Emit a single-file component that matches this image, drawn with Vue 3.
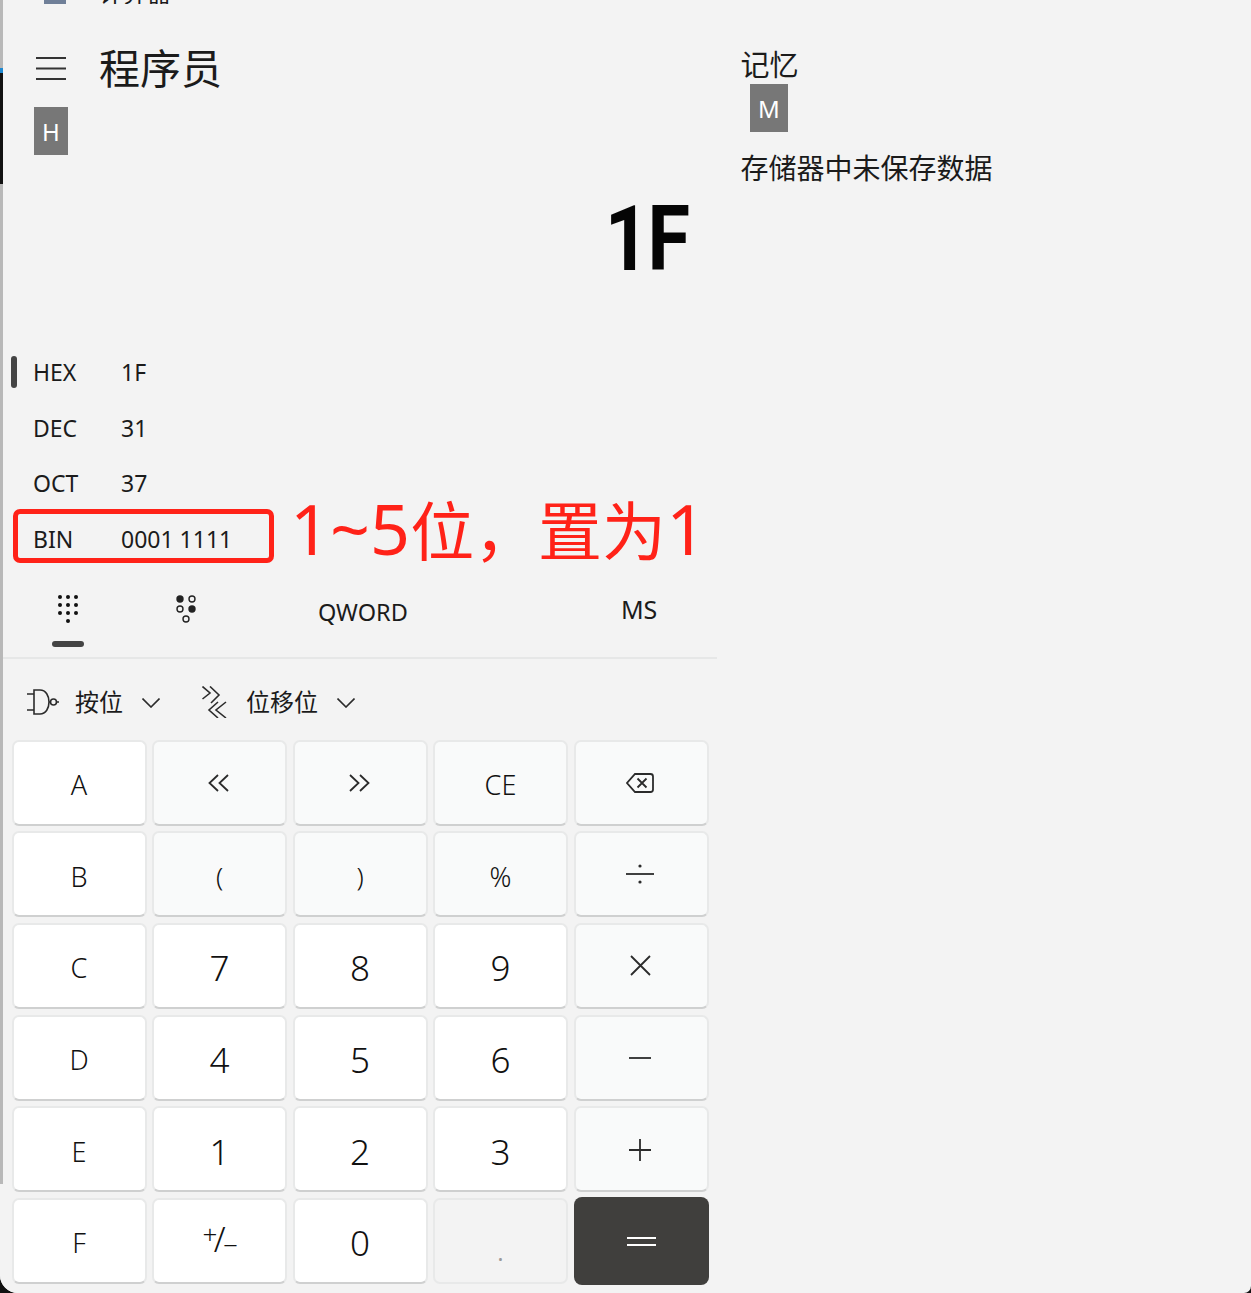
<script setup>
const bases = [
  { label: 'HEX', value: '1F', active: true },
  { label: 'DEC', value: '31' },
  { label: 'OCT', value: '37' }
]
const dots = [
  [11, 2], [19, 2], [27, 2],
  [11, 10], [19, 10], [27, 10],
  [11, 18], [19, 18], [27, 18],
  [19, 26]
]
const keys = [
  { t: 'A', c: 'white letter' }, { i: 'lshift', c: 'soft' }, { i: 'rshift', c: 'soft' }, { t: 'CE', c: 'soft letter' }, { i: 'back', c: 'soft' },
  { t: 'B', c: 'white letter' }, { t: '(', c: 'soft paren' }, { t: ')', c: 'soft paren' }, { t: '%', c: 'soft letter' }, { i: 'div', c: 'soft' },
  { t: 'C', c: 'white letter' }, { t: '7', c: 'white digit' }, { t: '8', c: 'white digit' }, { t: '9', c: 'white digit' }, { i: 'mul', c: 'soft' },
  { t: 'D', c: 'white letter' }, { t: '4', c: 'white digit' }, { t: '5', c: 'white digit' }, { t: '6', c: 'white digit' }, { i: 'minus', c: 'soft' },
  { t: 'E', c: 'white letter' }, { t: '1', c: 'white digit' }, { t: '2', c: 'white digit' }, { t: '3', c: 'white digit' }, { i: 'plus', c: 'soft' },
  { t: 'F', c: 'white letter' }, { i: 'neg', c: 'white' }, { t: '0', c: 'white digit' }, { t: '.', c: 'off' }, { i: 'eq', c: 'accent' }
]
const paths = {
  lshift: 'M10 1 1.5 9 10 17M20 1 11.5 9 20 17',
  rshift: 'M2 1 10.5 9 2 17M12 1 20.5 9 12 17',
  back: 'M9 2H24.5Q27 2 27 4.500V17.500Q27 20 24.500 20H9L1 11ZM11.500 6.500 20.500 15.500M20.500 6.500 11.500 15.500',
  div: 'M0 10H28',
  mul: 'M1 1 20 20M20 1 1 20',
  minus: 'M0 10H22',
  plus: 'M0 11H22M11 0V22',
  eq: 'M0 2H29M0 9H29'
}
const sizes = {
  lshift: [22, 18], rshift: [22, 18], back: [28, 22], div: [28, 20],
  mul: [21, 21], minus: [22, 20], plus: [22, 22], eq: [29, 11]
}
</script>

<template>
  <div class="screen">
    <main class="window">
      <section class="calc">
        <div class="titlebar">
          <span class="app-icon"></span>
          <span class="app-name">计算器</span>
        </div>

        <header class="mode">
          <svg class="menu" width="30" height="24" viewBox="0 0 30 24" aria-hidden="true">
            <path d="M0 2H30M0 12.500H30M0 23H30" />
          </svg>
          <h1>程序员</h1>
        </header>
        <div class="tip tip-h">H</div>

        <div class="display">1F</div>

        <ul class="bases">
          <li v-for="b in bases" :key="b.label" class="base-row">
            <span v-if="b.active" class="marker"></span>
            <span class="base-label">{{ b.label }}</span>
            <span>{{ b.value }}</span>
          </li>
          <li class="bin-line">
            <div class="bin-box">
              <span class="base-label">BIN</span>
              <span>0001 1111</span>
            </div>
            <span class="note"><span class="note-latin">1~5</span>位，置为<span class="note-latin">1</span></span>
          </li>
        </ul>

        <nav class="tabs">
          <div class="tab-keypad">
            <svg width="38" height="30" viewBox="0 0 38 30" aria-hidden="true">
              <circle v-for="(d, n) in dots" :key="n" :cx="d[0]" :cy="d[1]" r="2" fill="#111" />
            </svg>
            <span class="tab-bar"></span>
          </div>
          <svg class="tab-bits" width="24" height="30" viewBox="0 0 24 30" aria-hidden="true">
            <circle cx="5" cy="4" r="3.700" fill="#222" />
            <circle cx="17" cy="4" r="3" class="ring" />
            <circle cx="5" cy="14" r="3" class="ring" />
            <circle cx="17" cy="14" r="3.700" fill="#222" />
            <circle cx="11" cy="24" r="3" class="ring" />
          </svg>
          <span class="qword">QWORD</span>
          <span class="ms">MS</span>
        </nav>

        <div class="ops">
          <svg class="nand" width="32" height="26" viewBox="0 0 32 26" aria-hidden="true">
            <path d="M0 5H7M0 21H7M7 1H13C25 1 25 25 13 25H7ZM22 13H24M29 13H32" />
            <circle cx="26.500" cy="13" r="3" />
          </svg>
          <span class="op-label">按位</span>
          <svg class="chev" width="18" height="10" viewBox="0 0 18 10" aria-hidden="true">
            <path d="M0.500 0.500 9 9 17.500 0.500" />
          </svg>
          <svg class="shift" width="26" height="32" viewBox="0 0 26 32" aria-hidden="true">
            <path d="M0.500 0.500 8 7 0.500 13M8 0.500 17 9 9 17M16 16 7 24 16 32M24 16 14 24 24 32" />
          </svg>
          <span class="op-label">位移位</span>
          <svg class="chev" width="18" height="10" viewBox="0 0 18 10" aria-hidden="true">
            <path d="M0.500 0.500 9 9 17.500 0.500" />
          </svg>
        </div>

        <div class="keys">
          <button v-for="(k, n) in keys" :key="n" class="key" :class="k.c" type="button">
            <template v-if="k.t">{{ k.t }}</template>
            <span v-else-if="k.i === 'neg'" class="neg"><i class="neg-p">+</i><i class="neg-s">/</i><i class="neg-m">−</i></span>
            <svg v-else :width="sizes[k.i][0]" :height="sizes[k.i][1]" :viewBox="`0 0 ${sizes[k.i][0]} ${sizes[k.i][1]}`" :class="'ico-' + k.i" aria-hidden="true">
              <path :d="paths[k.i]" />
              <template v-if="k.i === 'div'">
                <circle cx="14" cy="2" r="1.600" class="dot" />
                <circle cx="14" cy="18" r="1.600" class="dot" />
              </template>
            </svg>
          </button>
        </div>
      </section>

      <aside class="memory">
        <h2>记忆</h2>
        <div class="tip tip-m">M</div>
        <p>存储器中未保存数据</p>
      </aside>
    </main>
    <span class="edge edge-gray"></span>
    <span class="edge edge-blue"></span>
    <span class="edge edge-dark"></span>
  </div>
</template>

<style scoped>
.screen {
  position: relative;
  width: 1251px;
  height: 1293px;
  overflow: hidden;
  background: #111;
  font-family: "Noto Sans", "Noto Sans CJK SC", sans-serif;
  color: #1b1b1b;
}
.window {
  display: flex;
  width: 1251px;
  height: 1293px;
  background: #f3f3f3;
  border-radius: 0 0 7px 18px;
  overflow: hidden;
}
.calc {
  width: 717px;
  flex: none;
  background: #f3f3f3;
}
.titlebar {
  display: flex;
  align-items: flex-end;
  height: 4px;
  overflow: hidden;
  padding-left: 44px;
}
.app-icon {
  width: 22px;
  height: 4px;
  flex: none;
  background: #6f7f98;
}
.app-name {
  margin-left: 33px;
  font-size: 24px;
  line-height: 24px;
  margin-bottom: -1px;
}
.mode {
  display: flex;
  align-items: center;
  height: 88px;
  padding: 40px 0 0 36px;
  box-sizing: border-box;
}
.menu path {
  fill: none;
  stroke: #333;
  stroke-width: 1.800;
}
h1 {
  margin: 0 0 0 33px;
  font-size: 41px;
  font-weight: 400;
  line-height: 48px;
}
.tip {
  display: flex;
  align-items: center;
  justify-content: center;
  background: #777;
  color: #fff;
  font-size: 24px;
}
.tip-h {
  width: 34px;
  height: 48px;
  margin: 15px 0 0 34px;
}
.display {
  height: 110px;
  margin-top: 30px;
  padding-right: 29px;
  text-align: right;
  font-family: Roboto, sans-serif;
  font-size: 90px;
  font-weight: 700;
  line-height: 110px;
  letter-spacing: -2px;
  color: #050505;
  transform: scaleX(0.86);
  transform-origin: 690px 50%;
}
.bases {
  list-style: none;
  margin: 49.500px 0 0;
  padding: 0;
  font-size: 23px;
}
.base-row {
  position: relative;
  display: flex;
  align-items: center;
  height: 55.500px;
  padding-left: 33px;
}
.marker {
  position: absolute;
  left: 11px;
  top: 11.500px;
  width: 6px;
  height: 32px;
  border-radius: 3px;
  background: #444;
}
.base-label {
  width: 88px;
  flex: none;
}
.bin-line {
  display: flex;
  align-items: center;
  height: 54px;
  margin-left: 13px;
  margin-top: -2.500px;
}
.bin-box {
  display: flex;
  align-items: center;
  width: 261px;
  height: 54px;
  box-sizing: border-box;
  border: 5px solid #ff2218;
  border-radius: 7px;
  padding: 6px 0 0 15px;
}
.note {
  margin-left: 16px;
  margin-top: -12px;
  font-family: "Noto Sans", "Noto Sans CJK SC", sans-serif;
  font-size: 64px;
  line-height: 70px;
  color: #ff2218;
  white-space: nowrap;
}
.note-latin {
  font-size: 70px;
}
.tabs {
  position: relative;
  display: flex;
  align-items: flex-start;
  height: 96px;
  margin-left: 3px;
  border-bottom: 2px solid #e6e7e7;
  font-size: 23.500px;
  box-sizing: border-box;
}
.tab-keypad {
  display: flex;
  flex-direction: column;
  align-items: center;
  width: 38px;
  margin: 32px 0 0 46px;
}
.tab-bar {
  width: 32px;
  height: 6px;
  margin-top: 16px;
  border-radius: 3px;
  background: #444;
}
.tab-bits {
  margin: 32px 0 0 88px;
}
.ring {
  fill: none;
  stroke: #222;
  stroke-width: 1.400;
}
.qword {
  margin: 33px 0 0 119px;
  line-height: 32px;
}
.ms {
  margin: 30px 0 0 213px;
  font-size: 25px;
  line-height: 32px;
}
.ops {
  display: flex;
  align-items: center;
  height: 81px;
  padding-left: 27px;
  padding-top: 5px;
  box-sizing: border-box;
  font-size: 24px;
}
.ops path,
.ops circle {
  fill: none;
  stroke: #2b2b2b;
  stroke-width: 1.600;
}
.op-label {
  line-height: 32px;
}
.nand {
  margin-right: 16px;
}
.chev {
  margin-left: 19px;
  margin-top: 2px;
}
.shift {
  margin: 0 18px 0 42px;
}
.keys {
  display: grid;
  grid-template-columns: repeat(5, 135px);
  grid-auto-rows: 86px;
  gap: 5.700px 5.500px;
  margin-left: 11.500px;
}
.key {
  display: flex;
  align-items: center;
  justify-content: center;
  padding: 4px 0 0;
  border: 2px solid #e8e9e9;
  border-bottom-color: #cfd0d0;
  border-radius: 7px;
  font-family: inherit;
  color: #111;
  font-weight: 400;
  font-size: 26px;
}
.white {
  background: #fff;
}
.soft {
  background: #f9fafa;
}
.off {
  background: #f3f3f3;
  border-color: #e8e9e9;
  color: #999;
  padding-top: 22px;
  font-size: 22px;
}
.accent {
  background: #403f3d;
  border: 0;
  border-radius: 8px;
  margin: -1px 0 -1px;
  padding: 1px 0 0;
}
.letter {
  font-size: 27px;
  font-weight: 350;
}
.digit {
  font-size: 35px;
  font-weight: 350;
}
.paren {
  font-size: 26px;
  font-weight: 350;
}
.key svg path {
  fill: none;
  stroke: #2b2b2b;
  stroke-width: 1.800;
}
.key .dot {
  fill: #2b2b2b;
}
.ico-lshift,
.ico-rshift,
.ico-back,
.ico-div,
.ico-mul,
.ico-minus {
  margin: 0 2px 4px 0;
}
.ico-plus {
  margin: 0 2px 2px 0;
}
.key .ico-eq path {
  stroke: #fff;
}
.neg {
  display: flex;
  align-items: flex-start;
  height: 34px;
  margin: 0 2px 8px 0;
}
.neg i {
  display: block;
  font-style: normal;
  line-height: 1;
  font-weight: 350;
}
.neg-p {
  margin-top: -1px;
  font-size: 26px;
  letter-spacing: -3.500px;
}
.neg-s {
  font-size: 34px;
  letter-spacing: -2.500px;
}
.neg-m {
  margin-top: 10px;
  font-size: 26px;
  letter-spacing: -3.500px;
}
.memory {
  padding: 45px 0 0 23.500px;
}
h2 {
  margin: 0;
  font-size: 29px;
  font-weight: 400;
  line-height: 39px;
}
.tip-m {
  width: 38px;
  height: 48px;
  margin-left: 9.500px;
}
.memory p {
  margin: 16px 0 0;
  font-size: 28px;
  line-height: 40px;
}
.edge {
  position: absolute;
  left: 0;
  width: 3px;
}
.edge-gray {
  top: 0;
  height: 1184px;
  background: #b8b8b8;
}
.edge-blue {
  top: 68px;
  height: 5px;
  background: #1e88d0;
}
.edge-dark {
  top: 73px;
  height: 111px;
  background: #111;
}
</style>
